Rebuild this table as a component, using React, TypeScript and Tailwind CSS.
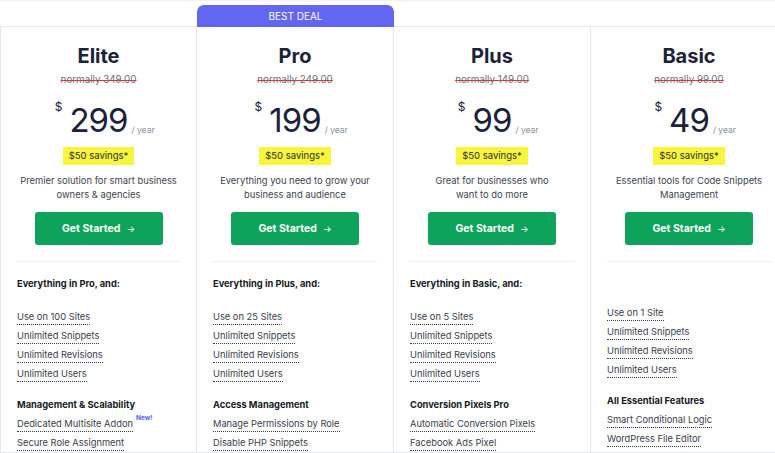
import React from "react";

type Group = { heading?: string; items: { label: string; isNew?: boolean }[] };

type Plan = {
  name: string;
  was: string;
  price: string;
  blurb: string[];
  featured?: boolean;
  groups: Group[];
};

const base = ["Unlimited Snippets", "Unlimited Revisions", "Unlimited Users"];

const plans: Plan[] = [
  {
    name: "Elite",
    was: "normally 349.00",
    price: "299",
    blurb: ["Premier solution for smart business", "owners & agencies"],
    groups: [
      {
        heading: "Everything in Pro, and:",
        items: [{ label: "Use on 100 Sites" }, ...base.map((label) => ({ label }))],
      },
      {
        heading: "Management & Scalability",
        items: [
          { label: "Dedicated Multisite Addon", isNew: true },
          { label: "Secure Role Assignment" },
        ],
      },
    ],
  },
  {
    name: "Pro",
    was: "normally 249.00",
    price: "199",
    featured: true,
    blurb: ["Everything you need to grow your", "business and audience"],
    groups: [
      {
        heading: "Everything in Plus, and:",
        items: [{ label: "Use on 25 Sites" }, ...base.map((label) => ({ label }))],
      },
      {
        heading: "Access Management",
        items: [
          { label: "Manage Permissions by Role" },
          { label: "Disable PHP Snippets" },
        ],
      },
    ],
  },
  {
    name: "Plus",
    was: "normally 149.00",
    price: "99",
    blurb: ["Great for businesses who", "want to do more"],
    groups: [
      {
        heading: "Everything in Basic, and:",
        items: [{ label: "Use on 5 Sites" }, ...base.map((label) => ({ label }))],
      },
      {
        heading: "Conversion Pixels Pro",
        items: [
          { label: "Automatic Conversion Pixels" },
          { label: "Facebook Ads Pixel" },
        ],
      },
    ],
  },
  {
    name: "Basic",
    was: "normally 99.00",
    price: "49",
    blurb: ["Essential tools for Code Snippets", "Management"],
    groups: [
      {
        items: [{ label: "Use on 1 Site" }, ...base.map((label) => ({ label }))],
      },
      {
        heading: "All Essential Features",
        items: [
          { label: "Smart Conditional Logic" },
          { label: "WordPress File Editor" },
        ],
      },
    ],
  },
];

function Feature({ label, isNew }: { label: string; isNew?: boolean }) {
  return (
    <div className="flex items-start">
      <span className="border-b border-dotted border-[#3a3f4b] pb-[1px] text-[9.3px] leading-[13px] text-[#3a404d]">
        {label}
      </span>
      {isNew && (
        <span className="ml-[3px] -mt-[3px] text-[6.5px] font-bold leading-[8px] text-[#5b5ef0]">
          New!
        </span>
      )}
    </div>
  );
}

function PlanColumn({ plan, first }: { plan: Plan; first?: boolean }) {
  return (
    <div className="flex w-[197px] shrink-0 flex-col">
      {plan.featured ? (
        <div className="h-[27px] pt-[5px]">
          <div className="flex h-[22px] items-center justify-center rounded-t-[7px] bg-[#6366f1] text-[10px] uppercase leading-none text-white">
            Best Deal
          </div>
        </div>
      ) : (
        <div className="h-[27px] border-b border-[#e5e7eb]" />
      )}

      <div
        className={`flex h-[426px] flex-col items-center border-r border-b border-[#e5e7eb] ${
          first ? "border-l" : ""
        }`}
      >
        <h2 className="mt-[17px] text-[20px] font-bold leading-[24px] text-[#1c2238]">
          {plan.name}
        </h2>
        <div className="mt-[5px] text-[9.8px] leading-[14px] text-[#6b7180] line-through decoration-[#d43a3a]">
          {plan.was}
        </div>

        <div className="relative mt-[16px]">
          <span className="absolute right-full -top-[3px] mr-[7px] text-[12px] leading-[14px] text-[#1c2238]">
            $
          </span>
          <span className="block text-[33px] font-normal leading-[34px] tracking-[-1px] text-[#1c2238]">
            {plan.price}
          </span>
          <span className="absolute left-full bottom-[2px] ml-[4px] whitespace-nowrap text-[8.5px] leading-[10px] text-[#8a909c]">
            / year
          </span>
        </div>

        <div className="mt-[10px] flex h-[18px] items-center bg-[#f9f43c] px-[6px] text-[9.5px] leading-none text-[#2a2f3a]">
          $50 savings*
        </div>

        <p className="mt-[9px] text-center text-[9.4px] leading-[14px] text-[#3d4451]">
          {plan.blurb[0]}
          <br />
          {plan.blurb[1]}
        </p>

        <button className="mt-[10px] flex h-[33px] w-[128px] items-center justify-center gap-[6px] rounded-[3px] bg-[#0ea35b] text-[10.5px] font-bold text-white">
          Get Started <span className="text-[9px] font-normal">→</span>
        </button>

        <div className="mt-[16px] w-[164px] border-t border-[#f1f2f4]" />

        <div className="flex w-full flex-col px-[16px]">
          {plan.groups.map((g, i) => (
            <div key={i} className="flex flex-col">
              {i === 0 ? (
                g.heading ? (
                  <div className="mt-[15px] h-[14px] text-[9.3px] font-bold leading-[14px] text-[#161a24]">
                    {g.heading}
                  </div>
                ) : (
                  <div className="mt-[15px] h-[10px]" />
                )
              ) : (
                <div className="mt-[16px] h-[14px] text-[9.3px] font-bold leading-[14px] text-[#161a24]">
                  {g.heading}
                </div>
              )}
              <div
                className={`flex flex-col gap-[4px] ${i === 0 ? "mt-[19px]" : "mt-[5px]"}`}
              >
                {g.items.map((it) => (
                  <Feature key={it.label} label={it.label} isNew={it.isNew} />
                ))}
              </div>
            </div>
          ))}
        </div>
      </div>
    </div>
  );
}

export default function App() {
  return (
    <div
      className="h-[453px] w-[775px] overflow-hidden border-t border-[#f1f2f4] bg-white"
      style={{ fontFamily: "Inter, 'Noto Sans', sans-serif" }}
    >
      <div className="-mt-[1px] flex">
        {plans.map((p, i) => (
          <PlanColumn key={p.name} plan={p} first={i === 0} />
        ))}
      </div>
    </div>
  );
}
